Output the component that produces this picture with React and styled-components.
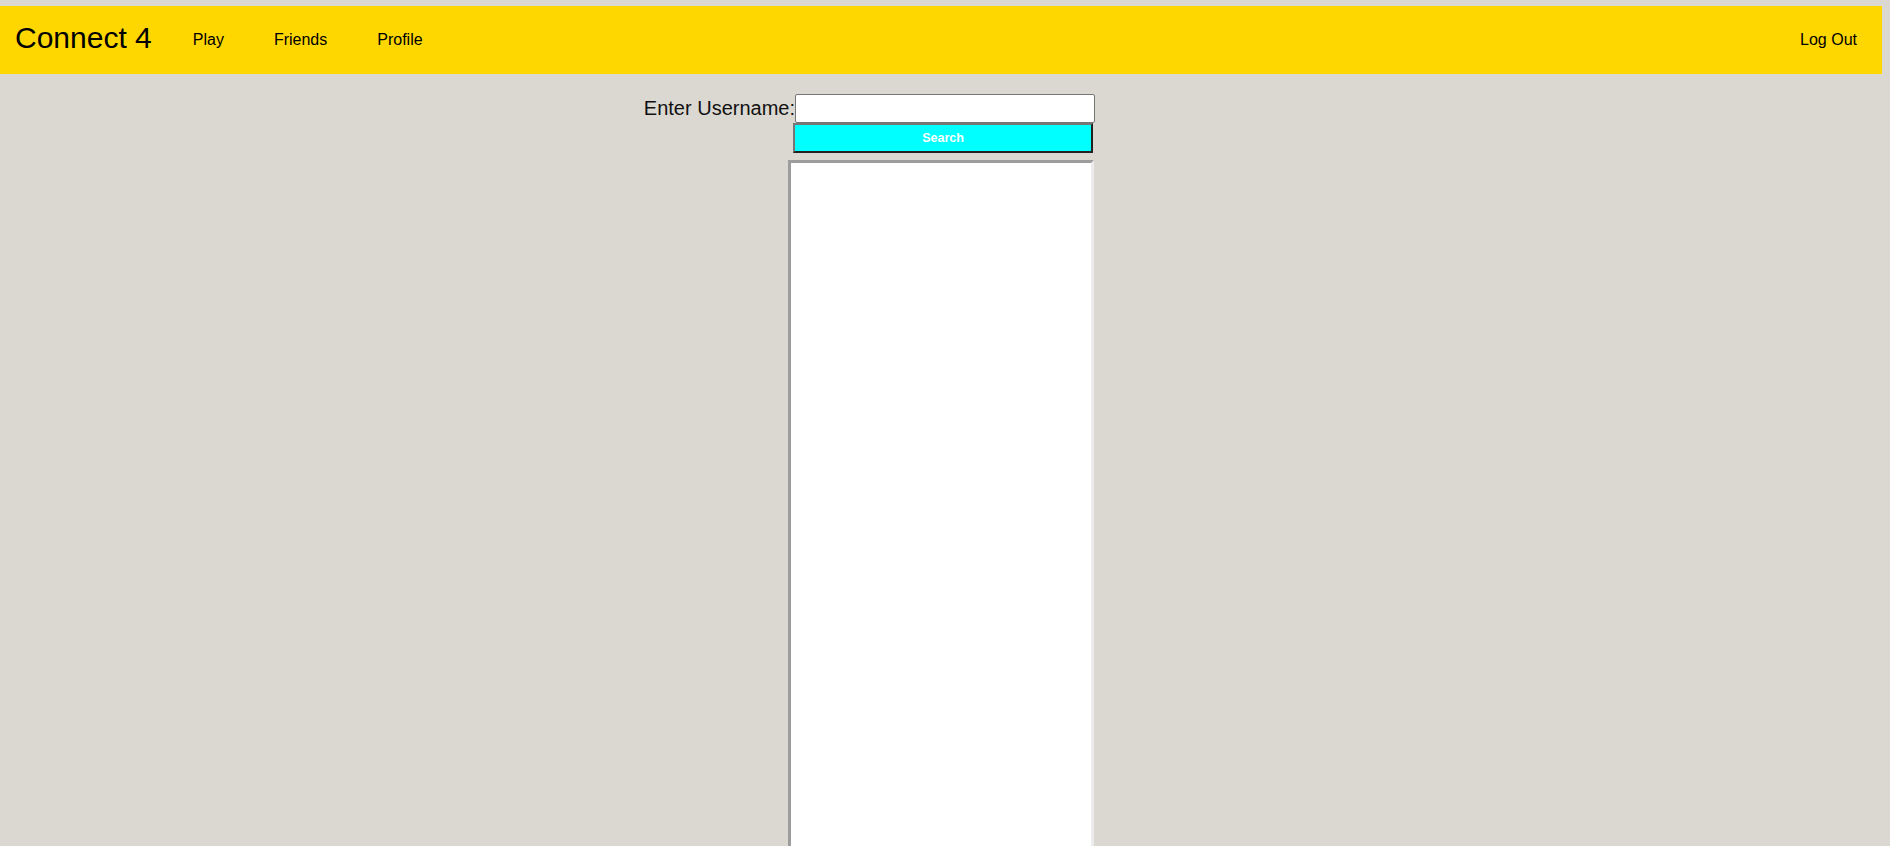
import React from "react";
import styled, { createGlobalStyle } from "styled-components";

const GlobalStyle = createGlobalStyle`
  html, body {
    margin: 0;
    padding: 0;
    background: #dbd8d2;
    font-family: "Liberation Sans", Arial, sans-serif;
    overflow: hidden;
  }
  body {
    padding: 6px 8px 0 0;
  }
`;

const Nav = styled.nav`
  display: flex;
  align-items: center;
  height: 68px;
  background: #ffd700;
  padding-left: 15px;
`;

const Brand = styled.div`
  font-size: 30px;
  color: #000;
  margin-right: 16px;
  margin-top: -4px;
`;

const NavLink = styled.a`
  font-size: 16px;
  color: #000;
  padding: 0 25px;
  text-decoration: none;
  cursor: pointer;
  margin-left: ${(p) => (p.$right ? "auto" : "0")};
`;

const Main = styled.main`
  display: flex;
  flex-direction: column;
  align-items: center;
  padding-top: 20px;
`;

const SearchRow = styled.div`
  display: grid;
  grid-template-columns: 1fr 300px 1fr;
  align-items: center;
  width: 100%;
  padding-left: 8px;
  box-sizing: border-box;
`;

const Label = styled.label`
  justify-self: end;
  font-size: 20px;
  color: #111;
  line-height: 29px;
`;

const Input = styled.input`
  box-sizing: border-box;
  width: 300px;
  height: 29px;
  border: 1px solid #767676;
  border-radius: 2px;
  background: #fff;
  padding: 1px 2px;
  font-size: 13px;
  outline: none;
`;

const SearchButton = styled.button`
  box-sizing: border-box;
  width: 300px;
  height: 30px;
  background: #00ffff;
  border-style: solid;
  border-width: 2px;
  border-color: #767676 #222 #222 #767676;
  color: #fff;
  font-family: "Liberation Sans", Arial, sans-serif;
  font-weight: bold;
  font-size: 12.5px;
  padding: 0;
  cursor: pointer;
  margin-left: 4px;
`;

const Results = styled.div`
  box-sizing: border-box;
  width: 306px;
  height: 760px;
  margin-top: 7px;
  background: #fff;
  border: 3px solid;
  border-color: #9d9d9d #ececec #ececec #9d9d9d;
`;

export default function App() {
  return (
    <>
      <GlobalStyle />
      <Nav>
        <Brand>Connect 4</Brand>
        <NavLink>Play</NavLink>
        <NavLink>Friends</NavLink>
        <NavLink>Profile</NavLink>
        <NavLink $right>Log Out</NavLink>
      </Nav>
      <Main>
        <SearchRow>
          <Label htmlFor="username">Enter Username:</Label>
          <Input id="username" type="text" />
        </SearchRow>
        <SearchButton>Search</SearchButton>
        <Results />
      </Main>
    </>
  );
}
